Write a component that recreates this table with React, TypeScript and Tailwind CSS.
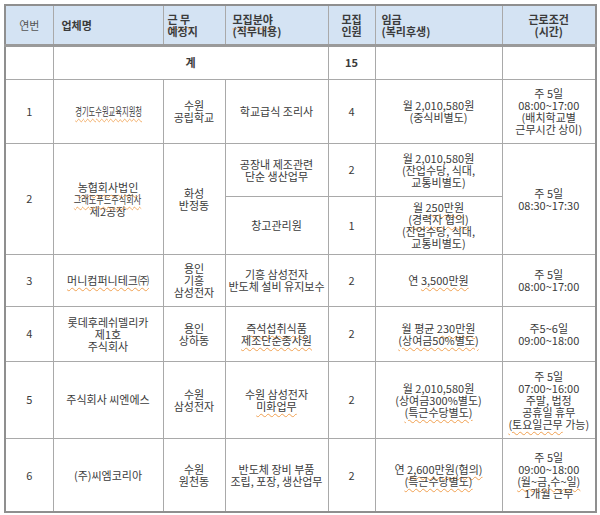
import type { ReactNode } from "react"

const cell = "border border-[#a9a9a9] text-center align-middle px-1"
const wavy = "underline decoration-wavy decoration-[#f0a050] decoration-1 underline-offset-2"

function Lines({ items }: { items: ReactNode[] }) {
  return (
    <div className="flex flex-col items-center">
      {items.map((t, i) => (
        <span key={i} className="block h-[12px] whitespace-nowrap leading-[12px]">
          {t}
        </span>
      ))}
    </div>
  )
}

function Squeeze({ children, scale }: { children: ReactNode; scale: string }) {
  return (
    <span className={`inline-block whitespace-nowrap ${scale} ${wavy}`}>{children}</span>
  )
}

function HeadLines({ top, bottom, topWavy }: { top: string; bottom: string; topWavy?: boolean }) {
  return (
    <div className="flex flex-col">
      <span className={`block h-[12px] leading-[12px] ${topWavy ? wavy : ""}`}>{top}</span>
      <span className="block h-[12px] leading-[12px]">{bottom}</span>
    </div>
  )
}

export default function App() {
  return (
    <div
      className="h-[515px] w-[600px] bg-white pl-1 pt-1 text-[11px] text-[#3b3b3b]"
      style={{ fontFamily: '"Malgun Gothic", "Noto Sans CJK KR", sans-serif' }}
    >
      <table className="w-[591px] table-fixed border-collapse border-2 border-[#8f8f8f]">
        <colgroup>
          <col className="w-[48px]" />
          <col className="w-[110px]" />
          <col className="w-[62px]" />
          <col className="w-[103px]" />
          <col className="w-[47px]" />
          <col className="w-[127px]" />
          <col className="w-[94px]" />
        </colgroup>
        <thead>
          <tr className="h-[40px] border-b-[3px] border-b-[#9a9a9a] bg-[#d4e3f3]">
            <th className={`${cell} font-normal text-[#555]`}>연번</th>
            <th className={`${cell} text-left pl-2 font-bold`}>업체명</th>
            <th className={`${cell} text-left pl-1 font-bold`}>
              <HeadLines top="근 무" bottom="예정지" topWavy />
            </th>
            <th className={`${cell} text-left pl-[7px] font-bold`}>
              <HeadLines top="모집분야" bottom="(직무내용)" topWavy />
            </th>
            <th className={`${cell} font-bold`}>
              <HeadLines top="모집" bottom="인원" />
            </th>
            <th className={`${cell} text-left pl-[6px] font-bold`}>
              <HeadLines top="임금" bottom="(복리후생)" />
            </th>
            <th className={`${cell} font-bold`}>
              <HeadLines top="근로조건" bottom="(시간)" />
            </th>
          </tr>
        </thead>
        <tbody>
          <tr className="h-[34px]">
            <td className={cell}></td>
            <td className={`${cell} font-bold`} colSpan={3}>
              계
            </td>
            <td className={`${cell} font-bold`}>15</td>
            <td className={cell}></td>
            <td className={cell}></td>
          </tr>

          <tr className="h-[64px]">
            <td className={cell}>1</td>
            <td className={cell}>
              <Squeeze scale="scale-x-[0.66]">경기도수원교육지원청</Squeeze>
            </td>
            <td className={cell}>
              <Lines items={["수원", "공립학교"]} />
            </td>
            <td className={cell}>학교급식 조리사</td>
            <td className={cell}>4</td>
            <td className={cell}>
              <Lines items={["월 2,010,580원", "(중식비별도)"]} />
            </td>
            <td className={cell}>
              <Lines items={["주 5일", "08:00~17:00", "(배치학교별", "근무시간 상이)"]} />
            </td>
          </tr>

          <tr className="h-[53px]">
            <td className={cell} rowSpan={2}>
              2
            </td>
            <td className={cell} rowSpan={2}>
              <Lines
                items={[
                  <span className={wavy}>농협회사법인</span>,
                  <Squeeze scale="scale-x-[0.74]">그래도푸드주식회사</Squeeze>,
                  "제2공장",
                ]}
              />
            </td>
            <td className={cell} rowSpan={2}>
              <Lines items={["화성", "반정동"]} />
            </td>
            <td className={cell}>
              <Lines items={["공장내 제조관련", "단순 생산업무"]} />
            </td>
            <td className={cell}>2</td>
            <td className={cell}>
              <Lines items={["월 2,010,580원", "(잔업수당, 식대,", "교통비별도)"]} />
            </td>
            <td className={cell} rowSpan={2}>
              <Lines items={["주 5일", "08:30~17:30"]} />
            </td>
          </tr>
          <tr className="h-[58px]">
            <td className={cell}>창고관리원</td>
            <td className={cell}>1</td>
            <td className={cell}>
              <Lines
                items={[
                  <>
                    월 <span className={wavy}>250만원</span>
                  </>,
                  <span className={wavy}>(경력자 협의)</span>,
                  "(잔업수당, 식대,",
                  "교통비별도)",
                ]}
              />
            </td>
          </tr>

          <tr className="h-[52px]">
            <td className={cell}>3</td>
            <td className={cell}>
              <span className={wavy}>머니컴퍼니테크㈜</span>
            </td>
            <td className={cell}>
              <Lines items={["용인", "기흥", "삼성전자"]} />
            </td>
            <td className={cell}>
              <Lines items={["기흥 삼성전자", "반도체 설비 유지보수"]} />
            </td>
            <td className={cell}>2</td>
            <td className={cell}>
              연 <span className={wavy}>3,500만원</span>
            </td>
            <td className={cell}>
              <Lines items={["주 5일", "08:00~17:00"]} />
            </td>
          </tr>

          <tr className="h-[55px]">
            <td className={cell}>4</td>
            <td className={cell}>
              <Lines items={["롯데후레쉬델리카", "제1호", "주식회사"]} />
            </td>
            <td className={cell}>
              <Lines items={["용인", "상하동"]} />
            </td>
            <td className={cell}>
              <Lines
                items={[
                  <span className={wavy}>즉석섭취식품</span>,
                  <span className={wavy}>제조단순종사원</span>,
                ]}
              />
            </td>
            <td className={cell}>2</td>
            <td className={cell}>
              <Lines
                items={[
                  <>
                    월 평균 <span className={wavy}>230만원</span>
                  </>,
                  <span className={wavy}>(상여금50%별도)</span>,
                ]}
              />
            </td>
            <td className={cell}>
              <Lines items={["주5~6일", "09:00~18:00"]} />
            </td>
          </tr>

          <tr className="h-[77px]">
            <td className={cell}>5</td>
            <td className={cell}>주식회사 씨엔에스</td>
            <td className={cell}>
              <Lines items={["수원", "삼성전자"]} />
            </td>
            <td className={cell}>
              <Lines items={["수원 삼성전자", <span className={wavy}>미화업무</span>]} />
            </td>
            <td className={cell}>2</td>
            <td className={cell}>
              <Lines
                items={[
                  "월 2,010,580원",
                  "(상여금300%별도)",
                  <span className={wavy}>(특근수당별도)</span>,
                ]}
              />
            </td>
            <td className={cell}>
              <Lines
                items={[
                  "주 5일",
                  "07:00~16:00",
                  "주말, 법정",
                  "공휴일 휴무",
                  <>
                    <span className={wavy}>(토요일근무</span> 가능)
                  </>,
                ]}
              />
            </td>
          </tr>

          <tr className="h-[74px]">
            <td className={cell}>6</td>
            <td className={cell}>(주)씨엠코리아</td>
            <td className={cell}>
              <Lines items={["수원", "원천동"]} />
            </td>
            <td className={cell}>
              <Lines items={["반도체 장비 부품", "조립, 포장, 생산업무"]} />
            </td>
            <td className={cell}>2</td>
            <td className={cell}>
              <Lines
                items={[
                  <>
                    연 <span className={wavy}>2,600만원(협의)</span>
                  </>,
                  <span className={wavy}>(특근수당별도)</span>,
                ]}
              />
            </td>
            <td className={cell}>
              <Lines
                items={[
                  "주 5일",
                  "09:00~18:00",
                  <span className={wavy}>(월~금,수~일)</span>,
                  "1개월 근무",
                ]}
              />
            </td>
          </tr>
        </tbody>
      </table>
    </div>
  )
}
